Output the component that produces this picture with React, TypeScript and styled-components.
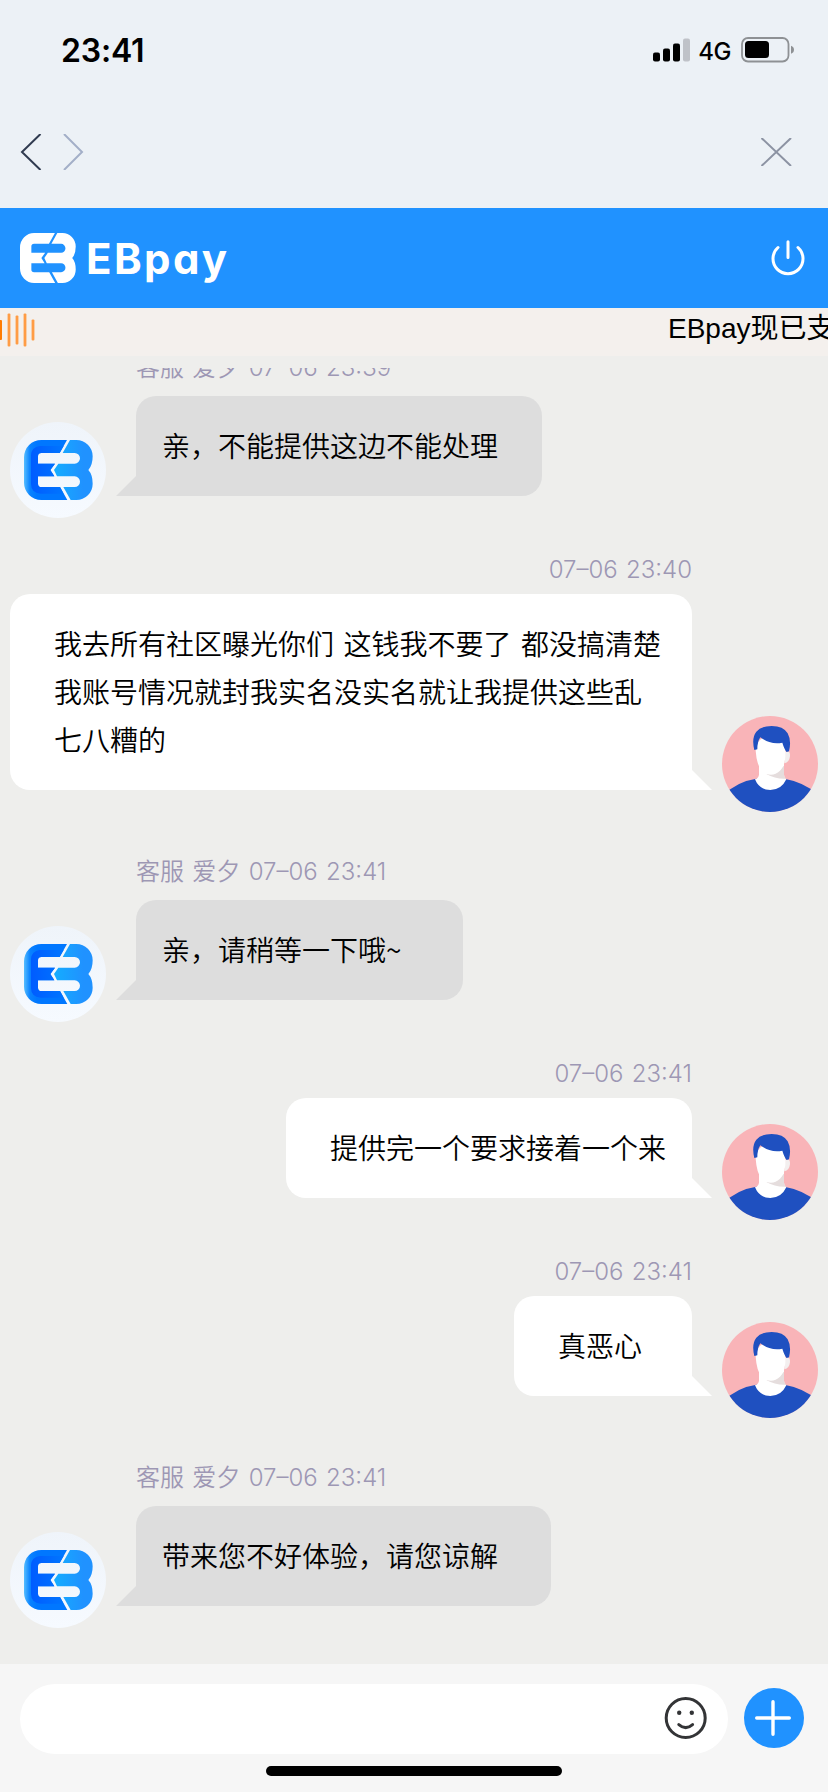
import React from "react";
import styled, { createGlobalStyle } from "styled-components";

const GlobalStyle = createGlobalStyle`
  * { box-sizing: border-box; }
  body {
    margin: 0;
    background: #eeeeec;
    font-family: Inter, "Noto Sans CJK SC", sans-serif;
    color: #000;
  }
  svg { display: block; flex: none; }
`;

const Screen = styled.div`
  width: 828px;
  height: 1792px;
  display: flex;
  flex-direction: column;
  overflow: hidden;
  background: #eeeeec;
`;

const StatusBar = styled.div`
  height: 100px;
  flex: none;
  display: flex;
  justify-content: space-between;
  align-items: center;
  padding: 0 34px 0 61px;
  background: #ecf1f6;
`;

const Clock = styled.span`
  font-size: 32px;
  font-weight: 600;
  letter-spacing: -0.2px;
`;

const StatusIcons = styled.div`
  display: flex;
  align-items: center;
`;

const Network = styled.span`
  margin: 3px 10px 0 7px;
  font-size: 24px;
  line-height: 30px;
  font-weight: 460;
  letter-spacing: -0.5px;
`;

const BrowserBar = styled.nav`
  height: 108px;
  flex: none;
  display: flex;
  justify-content: space-between;
  align-items: center;
  padding: 0 36px 4px 20px;
  background: #ecf1f6;
`;

const NavArrows = styled.div`
  display: flex;
  gap: 21px;
`;

const Header = styled.header`
  height: 100px;
  flex: none;
  display: flex;
  justify-content: space-between;
  align-items: center;
  padding: 0 22px 0 20px;
  background: #2092ff;
`;

const Brand = styled.div`
  display: flex;
  align-items: center;
  gap: 10px;
  color: #fff;
`;

const BrandName = styled.span`
  margin-top: 2px;
  font-size: 42px;
  line-height: 50px;
  font-weight: 650;
  letter-spacing: 2.4px;
  font-feature-settings: "cv11";
`;

const Notice = styled.div`
  height: 48px;
  flex: none;
  display: flex;
  justify-content: space-between;
  padding-top: 4px;
  overflow: hidden;
  background: #f4f0ed;
`;

const NoticeText = styled.div`
  width: 160px;
  flex: none;
  font-family: "Liberation Sans", "Noto Sans CJK SC", sans-serif;
  font-size: 28px;
  line-height: 34px;
  white-space: nowrap;
`;

const Chat = styled.main`
  flex: 1;
  min-height: 0;
  margin-top: 12px;
  padding-bottom: 36px;
  display: flex;
  flex-direction: column;
  justify-content: flex-end;
  gap: 36px;
  overflow: hidden;
`;

const Message = styled.section<{ $own: boolean }>`
  flex: none;
  display: flex;
  flex-direction: column;
  align-items: ${(p) => (p.$own ? "flex-end" : "flex-start")};
  padding: ${(p) => (p.$own ? "0 10px" : "4px 10px 0")};
`;

const Meta = styled.div<{ $own: boolean }>`
  height: ${(p) => (p.$own ? 32 : 40)}px;
  line-height: ${(p) => (p.$own ? 32 : 40)}px;
  margin: ${(p) => (p.$own ? "0 126px 8px 0" : "0 0 8px 126px")};
  font-size: 24px;
  font-weight: 350;
  word-spacing: 1.6px;
  color: #9d97b4;
  white-space: pre;
`;

const Body = styled.div<{ $own: boolean }>`
  display: flex;
  flex-direction: ${(p) => (p.$own ? "row-reverse" : "row")};
  align-items: flex-end;
  gap: 30px;
`;

const Bubble = styled.div<{ $own: boolean; $width: number }>`
  position: relative;
  width: ${(p) => p.$width}px;
  margin-bottom: 22px;
  padding: ${(p) => (p.$own ? "25px 20px 27px 44px" : "25px 38px 27px 26px")};
  border-radius: ${(p) => (p.$own ? "20px 20px 0 20px" : "20px 20px 20px 0")};
  background: ${(p) => (p.$own ? "#fff" : "#dddddd")};
  font-family: "Noto Sans CJK SC", sans-serif;
  font-size: 28px;
  line-height: 48px;
  font-weight: 350;
  word-spacing: 3.2px;
  white-space: pre;

  &::after {
    content: "";
    position: absolute;
    bottom: 0;
    ${(p) => (p.$own ? "right: -20px;" : "left: -20px;")}
    width: 20px;
    height: 20px;
    background: inherit;
    clip-path: ${(p) =>
      p.$own ? "polygon(0 0, 100% 100%, 0 100%)" : "polygon(100% 0, 100% 100%, 0 100%)"};
  }
`;

const AgentAvatar = styled.div`
  width: 96px;
  height: 96px;
  flex: none;
  display: flex;
  align-items: center;
  justify-content: center;
  border-radius: 50%;
  background: linear-gradient(#eff4fa, #f6faff);
`;

const Footer = styled.footer`
  height: 128px;
  flex: none;
  display: flex;
  flex-direction: column;
  align-items: center;
  padding: 20px 24px 16px 20px;
  gap: 12px;
  background: #f6f6f6;
`;

const Composer = styled.div`
  align-self: stretch;
  display: flex;
  align-items: center;
  gap: 16px;
`;

const InputBox = styled.div`
  width: 708px;
  height: 70px;
  display: flex;
  justify-content: flex-end;
  align-items: center;
  padding: 0 20px 2px 0;
  border-radius: 35px;
  background: #fff;
`;

const AddButton = styled.button`
  width: 60px;
  height: 60px;
  margin-bottom: 2px;
  padding: 0 2px 1px 0;
  display: flex;
  align-items: center;
  justify-content: center;
  border: 0;
  border-radius: 50%;
  background: #2092ff;
`;

const HomeIndicator = styled.div`
  width: 296px;
  height: 10px;
  margin-left: 4px;
  flex: none;
  border-radius: 5px;
  background: #000;
`;

const LEFT_HALF =
  "M52 0H129L107 39H52Q42 39 42 49V71H93L79 90L91 109H42V131Q42 141 52 141H108L130 180H52A52 52 0 0 1 0 128V52A52 52 0 0 1 52 0Z";
const RIGHT_HALF =
  "M138 0H157A49 49 0 0 1 206 49Q206 76 193 90Q206 104 206 131A49 49 0 0 1 157 180H140L118 141H152A16 16 0 0 0 152 109H99L90 90L103 71H152A16 16 0 0 0 152 39H116Z";

function LogoMark() {
  return (
    <svg width="56" height="50" viewBox="0 0 207 180" preserveAspectRatio="none" fill="#fff">
      <path d={LEFT_HALF} />
      <path d={RIGHT_HALF} />
    </svg>
  );
}

function AgentLogo({ id }: { id: string }) {
  return (
    <svg width="69" height="60" viewBox="0 0 207 180">
      <defs>
        <linearGradient id={`${id}l`} x1="0" x2="1" y1="0" y2="0">
          <stop offset="0" stopColor="#55bdff" />
          <stop offset="0.14" stopColor="#0a83ff" />
          <stop offset="0.3" stopColor="#0077ff" />
        </linearGradient>
        <linearGradient id={`${id}i`} x1="0" x2="1" y1="0" y2="0">
          <stop offset="0" stopColor="#005cff" />
          <stop offset="1" stopColor="#0075ff" />
        </linearGradient>
        <linearGradient id={`${id}r`} x1="0" x2="1" y1="0" y2="0">
          <stop offset="0" stopColor="#14adff" />
          <stop offset="0.75" stopColor="#2092ff" />
        </linearGradient>
      </defs>
      <path d={LEFT_HALF} fill={`url(#${id}l)`} />
      <path
        d="M46 18H119L107 39H52Q42 39 42 49V71H93L79 90L91 109H42V131Q42 141 52 141H108L119 161H50Q21 158 21 132V45Q22 23 46 18Z"
        fill={`url(#${id}i)`}
      />
      <path d={RIGHT_HALF} fill={`url(#${id}r)`} />
    </svg>
  );
}

function CustomerAvatar({ id }: { id: string }) {
  return (
    <svg width="96" height="96" viewBox="0 0 288 288">
      <clipPath id={id}>
        <circle cx="144" cy="144" r="144" />
      </clipPath>
      <g clipPath={`url(#${id})`}>
        <rect width="288" height="288" fill="#f9b4b8" />
        <path d="M0 240Q45 196 103 188H187Q245 198 288 235V288H0Z" fill="#1f50c0" />
        <path d="M111 135V176Q109 187 99 190Q112 222 145 222Q178 222 193 190Q186 186 186 176V135Z" fill="#fff" />
        <path d="M133 174Q165 171 186 149V176Q187 185 193 188Q161 190 133 174Z" fill="#e5dddd" />
        <path d="M190 108Q205 103 204 120Q202 139 187 142Z" fill="#f3efef" />
        <path d="M101 104Q102 64 145 61Q190 64 191 108Q190 150 174 164Q161 176 147 176Q132 176 119 163Q104 148 101 104Z" fill="#fff" />
        <path d="M97 102Q88 66 103 47Q117 30 149 30Q184 30 197 52Q209 74 201 106L194 108Q187 100 181 80Q146 87 115 64Q106 77 106 100Z" fill="#1f50c0" />
      </g>
    </svg>
  );
}

type Item = { own: boolean; meta: string; width: number; text: string };

const messages: Item[] = [
  { own: false, meta: "客服 爱夕 07–06 23:39", width: 406, text: "亲，不能提供这边不能处理" },
  {
    own: true,
    meta: "07–06 23:40",
    width: 682,
    text: "我去所有社区曝光你们 这钱我不要了 都没搞清楚\n我账号情况就封我实名没实名就让我提供这些乱\n七八糟的",
  },
  { own: false, meta: "客服 爱夕 07–06 23:41", width: 327, text: "亲，请稍等一下哦~" },
  { own: true, meta: "07–06 23:41", width: 406, text: "提供完一个要求接着一个来" },
  { own: true, meta: "07–06 23:41", width: 178, text: "真恶心" },
  { own: false, meta: "客服 爱夕 07–06 23:41", width: 415, text: "带来您不好体验，请您谅解" },
];

export default function App() {
  return (
    <Screen>
      <GlobalStyle />
      <StatusBar>
        <Clock>23:41</Clock>
        <StatusIcons>
          <svg width="38" height="24" viewBox="0 0 38 24">
            <rect x="0" y="14.5" width="7" height="9" rx="2" />
            <rect x="10" y="10.5" width="7" height="13" rx="2" />
            <rect x="20" y="5.5" width="7" height="18" rx="2" />
            <rect x="30" y="0.5" width="7" height="23" rx="2" fill="#bfc2c8" />
          </svg>
          <Network>4G</Network>
          <svg width="53" height="26" viewBox="0 0 53 26">
            <rect x="1" y="1" width="46.5" height="23.5" rx="6" fill="none" stroke="#8e9194" strokeWidth="1.8" />
            <rect x="4" y="4" width="24" height="17" rx="3.5" />
            <path d="M50 8.8Q53 10 53 12.8Q53 15.6 50 16.8Z" fill="#8e9194" />
          </svg>
        </StatusIcons>
      </StatusBar>
      <BrowserBar>
        <NavArrows>
          <svg width="22" height="36" viewBox="0 0 22 36" fill="none" stroke="#303b50" strokeWidth="2">
            <path d="M20.5 0L2 18L20.5 36" />
          </svg>
          <svg width="22" height="36" viewBox="0 0 22 36" fill="none" stroke="#a3afc8" strokeWidth="2">
            <path d="M1 0L19 18L1 36" />
          </svg>
        </NavArrows>
        <svg width="31" height="28" viewBox="0 0 31 28" fill="none" stroke="#8c93a3" strokeWidth="2">
          <path d="M0.5 0L30 28M30 0L0.5 28" />
        </svg>
      </BrowserBar>
      <Header>
        <Brand>
          <LogoMark />
          <BrandName>EBpay</BrandName>
        </Brand>
        <svg width="36" height="36" viewBox="0 0 36 36" fill="none" stroke="#fff" strokeWidth="3" strokeLinecap="round">
          <path d="M8 7.5A15 15 0 1 0 28 7.5M18 1.8V17.5" />
        </svg>
      </Header>
      <Notice>
        <svg width="36" height="36" viewBox="0 0 36 36" fill="#ff9c45">
          <rect x="-2" y="8" width="4" height="20" rx="1" fill="#ff7d05" />
          <rect x="7.6" y="1.5" width="2.8" height="33" rx="1" />
          <rect x="15.6" y="3.5" width="2.8" height="29" rx="1" />
          <rect x="23.6" y="1.5" width="2.8" height="33" rx="1" />
          <rect x="31.6" y="7.5" width="2.8" height="21" rx="1" />
        </svg>
        <NoticeText>EBpay现已支</NoticeText>
      </Notice>
      <Chat>
        {messages.map((m, i) => (
          <Message key={i} $own={m.own}>
            <Meta $own={m.own}>{m.meta}</Meta>
            <Body $own={m.own}>
              {m.own ? (
                <CustomerAvatar id={`customer${i}`} />
              ) : (
                <AgentAvatar>
                  <AgentLogo id={`agent${i}`} />
                </AgentAvatar>
              )}
              <Bubble $own={m.own} $width={m.width}>
                {m.text}
              </Bubble>
            </Body>
          </Message>
        ))}
      </Chat>
      <Footer>
        <Composer>
          <InputBox>
            <svg width="44" height="44" viewBox="0 0 44 44" fill="none" stroke="#333436" strokeWidth="3" strokeLinecap="round">
              <circle cx="21.7" cy="22" r="19.5" />
              <path d="M14.8 28.6Q21.7 34.6 28.6 28.6" />
              <circle cx="15.2" cy="16.8" r="2.2" fill="#333436" stroke="none" />
              <circle cx="27.8" cy="16.8" r="2.2" fill="#333436" stroke="none" />
            </svg>
          </InputBox>
          <AddButton aria-label="添加">
            <svg width="36" height="36" viewBox="0 0 36 36" stroke="#fff" strokeWidth="3.4" strokeLinecap="round">
              <path d="M18 1.7V34.3M1.7 18H34.3" />
            </svg>
          </AddButton>
        </Composer>
        <HomeIndicator />
      </Footer>
    </Screen>
  );
}
